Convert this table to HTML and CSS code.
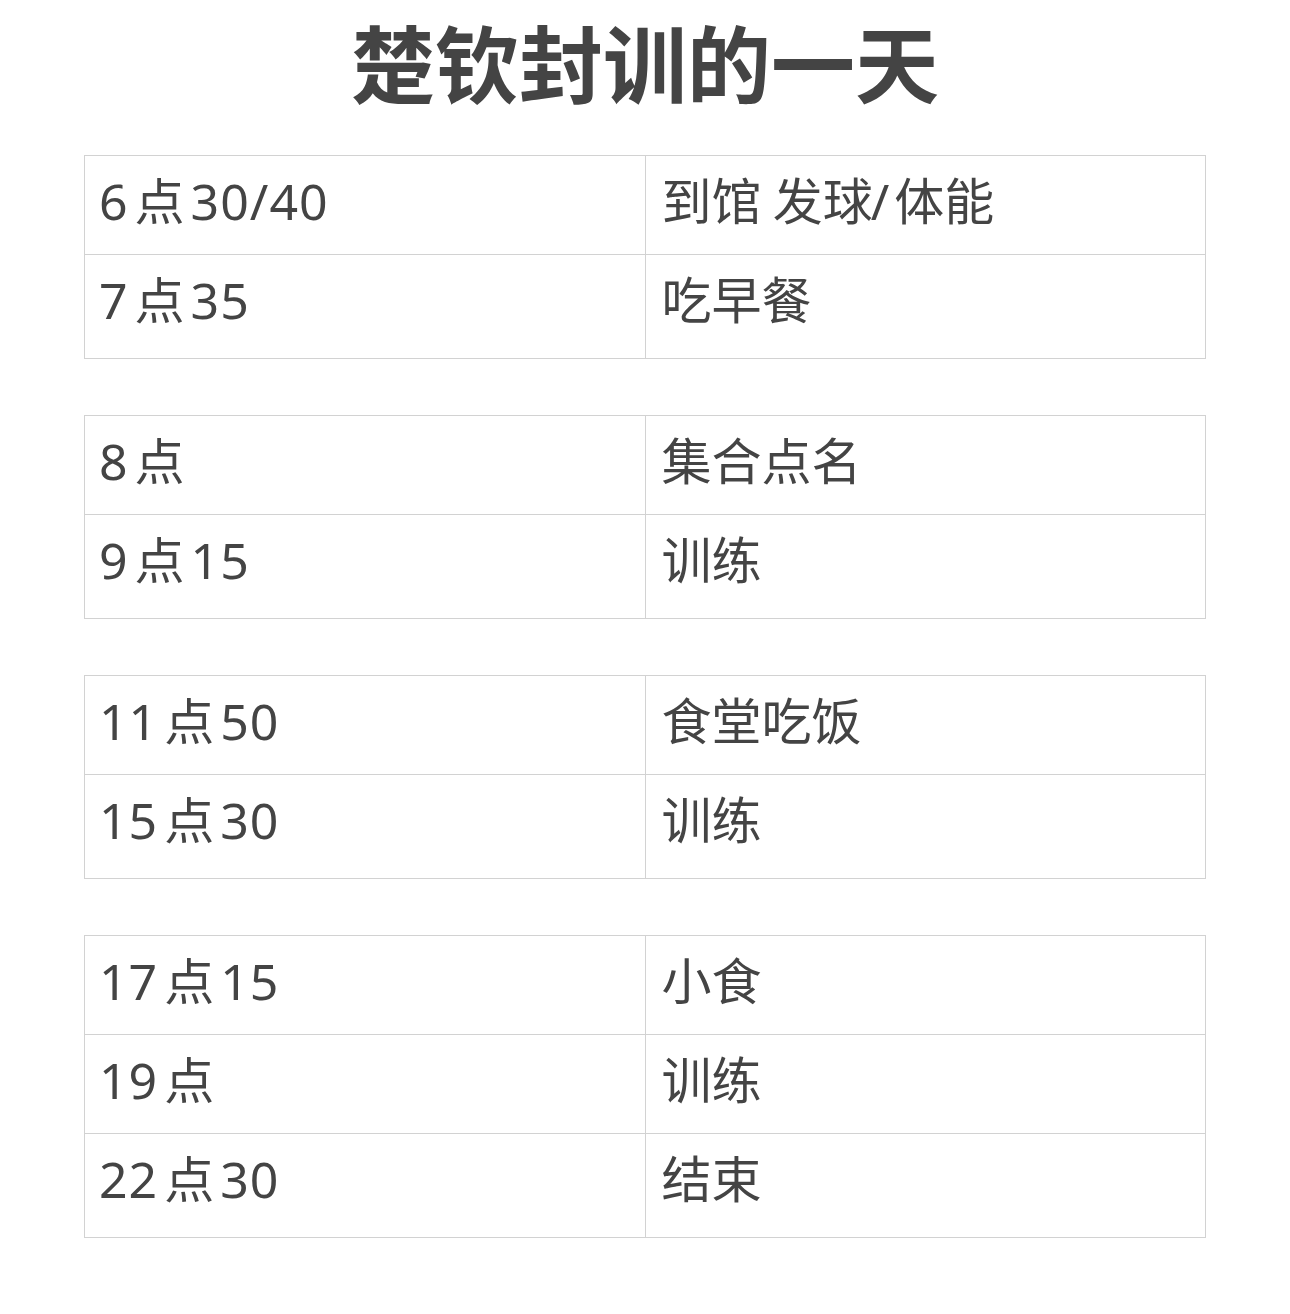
FILE: index.html
```html
<!DOCTYPE html>
<html lang="zh-CN">
<head>
<meta charset="utf-8">
<title>楚钦封训的一天</title>
<link rel="stylesheet" href="styles.css">
</head>
<body>
<h1 class="title">楚钦封训的一天</h1>
<table class="sched">
  <tr><td><span class="n">6</span>点<span class="n">30/40</span></td><td>到馆 发球<span class="n sl">/</span>体能</td></tr>
  <tr><td><span class="n">7</span>点<span class="n">35</span></td><td>吃早餐</td></tr>
</table>
<table class="sched">
  <tr><td><span class="n">8</span>点</td><td>集合点名</td></tr>
  <tr><td><span class="n">9</span>点<span class="n">15</span></td><td>训练</td></tr>
</table>
<table class="sched">
  <tr><td><span class="n">11</span>点<span class="n">50</span></td><td>食堂吃饭</td></tr>
  <tr><td><span class="n">15</span>点<span class="n">30</span></td><td>训练</td></tr>
</table>
<table class="sched">
  <tr><td><span class="n">17</span>点<span class="n">15</span></td><td>小食</td></tr>
  <tr><td><span class="n">19</span>点</td><td>训练</td></tr>
  <tr><td><span class="n">22</span>点<span class="n">30</span></td><td>结束</td></tr>
</table>
</body>
</html>
```
FILE: styles.css
```css
body {
  margin: 0;
  padding: 4px 84px 40px;
  background: #fff;
  color: #444;
  font-family: "Noto Sans CJK SC", "Noto Sans", sans-serif;
}
.title {
  margin: 0 0 37px;
  font-size: 84px;
  line-height: 114px;
  font-weight: 700;
  text-align: center;
  color: #444;
}
.sched {
  width: 100%;
  border-collapse: collapse;
  table-layout: fixed;
  margin-bottom: 56px;
}
.sched td {
  border: 1px solid #d2d2d2;
  padding: 12px 16px 26px;
  font-size: 50px;
  line-height: 60px;
  vertical-align: top;
  white-space: nowrap;
}
.sched tr:last-child td {
  padding-bottom: 31px;
}
.n {
  font-family: "Noto Sans", "Open Sans", sans-serif;
  line-height: 0;
  letter-spacing: 1px;
  margin: 0 6px;
}
.n:first-child {
  margin-left: -2px;
}
.sl {
  letter-spacing: 0;
  margin: 0 5px;
}
```
